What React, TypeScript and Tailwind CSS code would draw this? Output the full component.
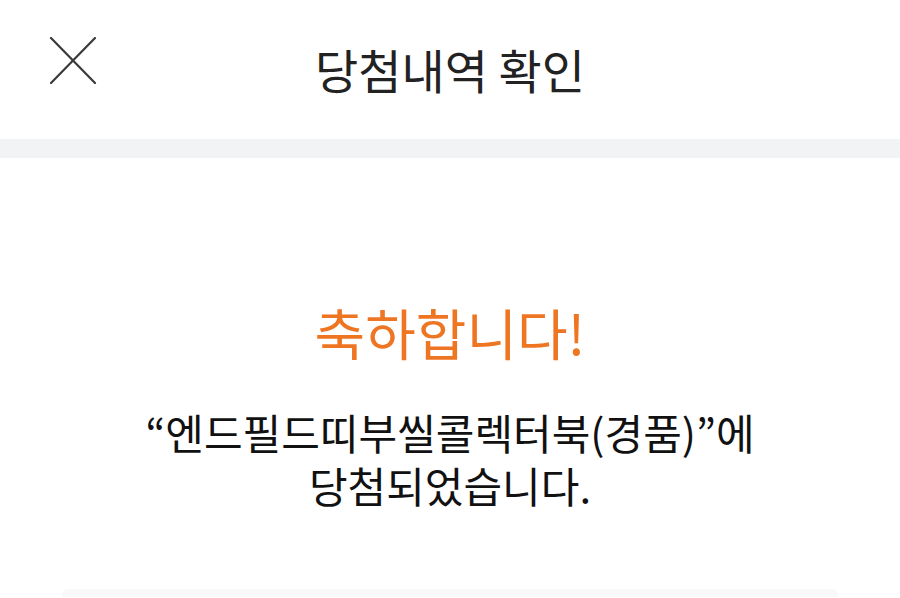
import React from 'react'

// thin close mark used in the top bar
const CloseIcon = () => (
    <svg width="48" height="48" viewBox="0 0 48 48" fill="none" stroke="#3a3a3a" strokeWidth="2.2" strokeLinecap="round">
        <line x1="2" y1="1" x2="46" y2="46" />
        <line x1="46" y1="1" x2="2" y2="46" />
    </svg>
)

const App = () => {
    return (
        <div className="h-[598px] overflow-hidden bg-white font-['Noto_Sans_CJK_KR','Noto_Sans',sans-serif]">
            {/* top bar */}
            <div className="relative flex h-[139px] items-center justify-center">
                <button className="absolute left-[49px] top-[37px]">
                    <CloseIcon />
                </button>
                <h1 className="text-[47px] font-normal text-[#222]">당첨내역 확인</h1>
            </div>
            <div className="h-[19px] bg-[#f2f3f5]" />

            {/* result */}
            <div className="flex flex-col items-center pt-[137px]">
                <p className="text-[55px] font-normal leading-[72px] text-[#ee7623]">축하합니다!</p>
                <div className="mt-[38px] flex flex-col items-center text-[42px] font-normal leading-[53px] text-[#111]">
                    <p>“엔드필드띠부씰콜렉터북(경품)”에</p>
                    <p>당첨되었습니다.</p>
                </div>
                <div className="mt-[78px] h-[8px] w-[776px] rounded-t-[6px] bg-[#f9f9f9]" />
            </div>
        </div>
    )
}

export default App
